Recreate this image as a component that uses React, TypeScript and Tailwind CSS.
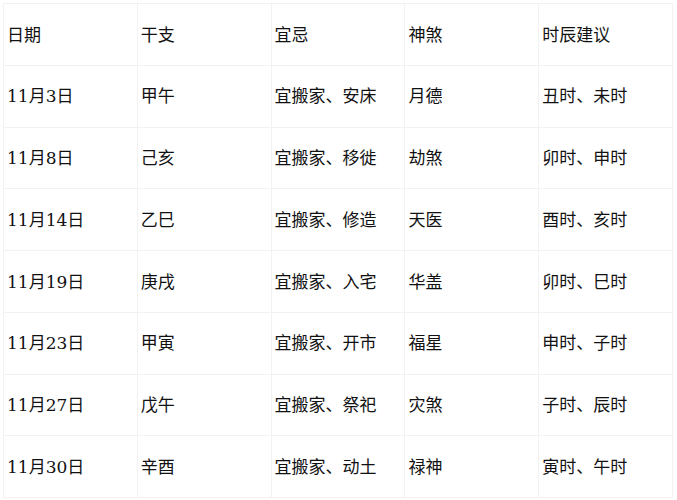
const headers = ['日期', '干支', '宜忌', '神煞', '时辰建议']

const rows = [
  ['11月3日', '甲午', '宜搬家、安床', '月德', '丑时、未时'],
  ['11月8日', '己亥', '宜搬家、移徙', '劫煞', '卯时、申时'],
  ['11月14日', '乙巳', '宜搬家、修造', '天医', '酉时、亥时'],
  ['11月19日', '庚戌', '宜搬家、入宅', '华盖', '卯时、巳时'],
  ['11月23日', '甲寅', '宜搬家、开市', '福星', '申时、子时'],
  ['11月27日', '戊午', '宜搬家、祭祀', '灾煞', '子时、辰时'],
  ['11月30日', '辛酉', '宜搬家、动土', '禄神', '寅时、午时'],
]

export default function App() {
  return (
    <div className="w-[677px] h-[500px] bg-white pt-[3px] pl-[3px] font-['DejaVu_Serif','Noto_Sans_CJK_SC',serif] text-[17px] text-[#111]">
      <div className="w-[670px] grid grid-cols-5 border-t border-l border-[#f2f2f2]">
        {[headers, ...rows].map((row, i) =>
          row.map((cell, j) => (
            <div
              key={`${i}-${j}`}
              className="h-[61.75px] flex items-center pl-[3px] pt-[2px] border-r border-b border-[#f2f2f2]"
            >
              {cell}
            </div>
          )),
        )}
      </div>
    </div>
  )
}
